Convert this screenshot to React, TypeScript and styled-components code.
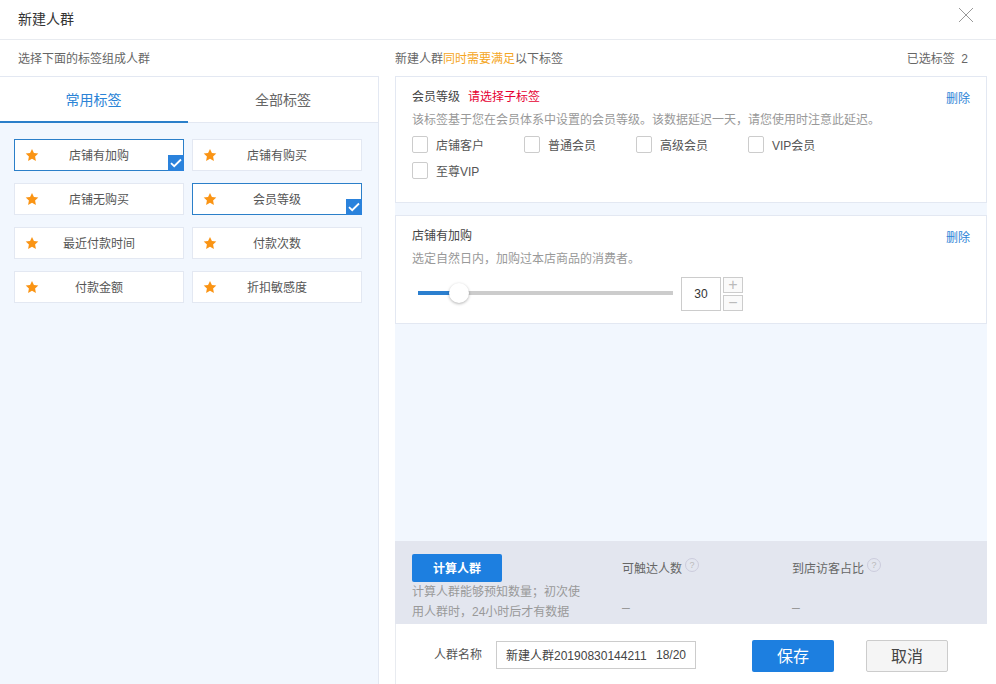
import React from "react";
import styled, { createGlobalStyle } from "styled-components";

const Global = createGlobalStyle`
  html, body { margin: 0; padding: 0; background: #fff; }
  * { box-sizing: border-box; }
  body { font-family: "Liberation Sans", "Noto Sans CJK SC", sans-serif; font-size: 12px; color: #333; }
`;

const Page = styled.div`
  width: 996px; height: 684px; overflow: hidden; display: flex; flex-direction: column; background: #fff;
`;
const Header = styled.header`
  height: 40px; flex: none; display: flex; align-items: center; justify-content: space-between;
  padding: 0 22px 3px 18px; border-bottom: 1px solid #e8ebf0;
`;
const Title = styled.h1`
  margin: 0; font-size: 14px; font-weight: 400; color: #333;
`;
const CloseButton = styled.button`
  border: 0; background: none; padding: 0; width: 16px; height: 16px; margin-top: -7px; display: block; color: #999;
`;
const Body = styled.div`
  flex: 1; display: grid; grid-template-columns: 395px 1fr; min-height: 0;
`;
const LeftColumn = styled.section`
  display: flex; flex-direction: column; min-height: 0;
`;
const RightColumn = styled.section`
  display: flex; flex-direction: column; min-height: 0; padding-right: 9px;
`;
const SubHead = styled.div<{ $pad?: string }>`
  height: 36px; flex: none; display: flex; align-items: center; justify-content: space-between;
  padding: ${(p) => p.$pad || "0"}; color: #666; font-size: 12px;
`;
const Accent = styled.span`
  color: #f5a623;
`;
const LeftPanel = styled.div`
  flex: 1; width: 379px; border-top: 1px solid #e3e8f2; border-right: 1px solid #e3e8f2;
  display: flex; flex-direction: column; background: #f2f7fe;
`;
const Tabs = styled.div`
  display: grid; grid-template-columns: 188px 1fr; height: 46px; flex: none; background: #fff;
  border-bottom: 1px solid #e3e8f2;
`;
const Tab = styled.div<{ $active?: boolean }>`
  display: flex; align-items: center; justify-content: center; font-size: 14px; height: 46px; padding: 0 ${(p) => (p.$active ? "1px" : "0")} 1px 0;
  color: ${(p) => (p.$active ? "#2b83d6" : "#666")};
  border-bottom: 2px solid ${(p) => (p.$active ? "#2b7fc9" : "transparent")};
`;
const TagGrid = styled.div`
  display: grid; grid-template-columns: 170px 170px; column-gap: 8px; row-gap: 12px; padding: 16px 14px;
`;
const TagCard = styled.div<{ $selected?: boolean }>`
  position: relative; height: 32px; background: #fff; display: grid; grid-template-columns: 1fr auto 1fr; align-items: center;
  padding-left: 10px; font-size: 12px; color: #555;
  border: 1px solid ${(p) => (p.$selected ? "#2b7fc9" : "#e3e8f2")};
`;
const TagStar = styled.svg`
  width: 14px; height: 14px; color: #fa9414; display: block;
`;
const TagName = styled.span`
  transform: translate(-5px, -1px);
`;
const Badge = styled.span`
  position: absolute; right: -1px; bottom: -1px; width: 16px; height: 16px; background: #2a82dc;
  display: flex; align-items: center; justify-content: center;
`;
const Main = styled.div`
  flex: 1; background: #f2f7fe; display: flex; flex-direction: column; gap: 12px; min-height: 0;
`;
const Card = styled.article<{ $h: number }>`
  height: ${(p) => p.$h}px; background: #fff; border: 1px solid #e3e8f2; padding: 8px 16px 0; position: relative;
`;
const CardHead = styled.div`
  display: flex; align-items: center; gap: 8px; height: 20px; font-size: 12px; color: #444;
`;
const Warn = styled.span`
  color: #e60033;
`;
const DeleteLink = styled.a`
  margin-left: auto; color: #2b83d6; font-size: 12px; position: relative; top: 2px;
`;
const Desc = styled.p`
  margin: 6px 0 0; color: #999; font-size: 12px; line-height: 18px;
`;
const Checks = styled.div`
  display: grid; grid-template-columns: repeat(4, 112px); row-gap: 8px; margin-top: 6px;
`;
const CheckItem = styled.label`
  display: flex; align-items: center; gap: 8px; height: 18px; color: #555; font-size: 12px;
`;
const CheckBox = styled.span`
  width: 16px; height: 17px; border: 1px solid #ccc; border-radius: 2px; background: #fff; flex: none;
`;
const SliderRow = styled.div`
  display: flex; align-items: center; margin-top: 9px; padding-left: 6px; gap: 8px;
`;
const Track = styled.div`
  position: relative; width: 255px; height: 4px; background: #ccc; margin-bottom: 2px;
`;
const Fill = styled.div`
  height: 4px; background: #2b7fcf;
`;
const Thumb = styled.span`
  position: absolute; top: -8px; width: 20px; height: 20px; border-radius: 50%; background: #fff;
  box-shadow: 0 1px 3px rgba(0, 0, 0, 0.3);
`;
const NumberBox = styled.div`
  width: 40px; height: 34px; border: 1px solid #ccc; display: flex; align-items: center; justify-content: center; font-size: 12px; color: #333;
`;
const Steppers = styled.div`
  display: flex; flex-direction: column; gap: 2px; margin-left: -6px;
`;
const Stepper = styled.span`
  width: 20px; height: 16px; border: 1px solid #ccc; color: #bbb; background: #fafafa;
  display: flex; align-items: center; justify-content: center; font-size: 16px; line-height: 1;
`;
const CalcPanel = styled.div`
  height: 83px; flex: none; background: #e3e6ef; display: grid; grid-template-columns: 210px 170px 1fr; padding: 13px 0 0 17px;
`;
const CalcIntro = styled.div`
  width: 170px;
`;
const CalcButton = styled.button`
  display: flex; align-items: center; justify-content: center; width: 90px; height: 28px; border: 0; border-radius: 2px; background: #1d7fe0; color: #fff; font: inherit; font-weight: 700; padding: 0 0 2px;
`;
const CalcNote = styled.p`
  margin: 0; color: #999; font-size: 12px; line-height: 20px; width: 170px;
`;
const Stat = styled.div`
  display: flex; flex-direction: column; color: #666; font-size: 12px;
`;
const StatLabel = styled.div`
  display: flex; align-items: center; gap: 3px; height: 26px;
`;
const HelpIcon = styled.span`
  width: 14px; height: 14px; border: 1px solid #ccd; border-radius: 50%; color: #bbb; font-size: 9px;
  display: inline-flex; align-items: center; justify-content: center; position: relative; top: -2px;
`;
const StatValue = styled.div`
  margin-top: 17px; color: #999; line-height: 20px; font-size: 14px;
`;
const Footer = styled.div`
  height: 60px; flex: none; display: flex; align-items: flex-start; padding: 16px 0 0 38px; border-left: 1px solid #e8ebf0; background: #fff;
`;
const NameLabel = styled.span`
  color: #555; line-height: 30px; margin-right: 14px; font-size: 12px;
`;
const NameInput = styled.div`
  width: 200px; height: 28px; margin-top: 1px; border: 1px solid #ccc; display: flex; justify-content: space-between; align-items: center; padding: 0 9px 1px; color: #444; font-size: 12px;
`;
const FooterButton = styled.button<{ $primary?: boolean }>`
  width: 82px; height: 32px; border-radius: 2px; font-size: 16px; padding: 0 0 2px; font-family: inherit;
  margin-left: ${(p) => (p.$primary ? "56px" : "32px")};
  color: ${(p) => (p.$primary ? "#fff" : "#444")};
  background: ${(p) => (p.$primary ? "#1d7fe0" : "#f5f5f5")};
  border: ${(p) => (p.$primary ? "0" : "1px solid #ccc")};
`;

const Star = () => (
  <TagStar viewBox="0 0 24 24" aria-hidden>
    <path fill="currentColor" d="M12 1.5l3.3 6.9 7.5 1-5.5 5.2 1.4 7.5L12 18.4l-6.7 3.7 1.4-7.5L1.2 9.4l7.5-1z" />
  </TagStar>
);

const Tick = () => (
  <svg width="12" height="10" viewBox="0 0 12 10" aria-hidden>
    <path d="M1 5.2l3.2 3L11 1.5" fill="none" stroke="#fff" strokeWidth="1.8" />
  </svg>
);

const tags: [string, boolean][] = [
  ["店铺有加购", true],
  ["店铺有购买", false],
  ["店铺无购买", false],
  ["会员等级", true],
  ["最近付款时间", false],
  ["付款次数", false],
  ["付款金额", false],
  ["折扣敏感度", false],
];

const levels = ["店铺客户", "普通会员", "高级会员", "VIP会员", "至尊VIP"];

export default function App() {
  return (
    <Page>
      <Global />
      <Header>
        <Title>新建人群</Title>
        <CloseButton aria-label="关闭">
          <svg width="16" height="16" viewBox="0 0 16 16" aria-hidden>
            <path d="M1 1l14 14M15 1L1 15" stroke="currentColor" strokeWidth="1" fill="none" />
          </svg>
        </CloseButton>
      </Header>
      <Body>
        <LeftColumn>
          <SubHead $pad="0 0 2px 18px">选择下面的标签组成人群</SubHead>
          <LeftPanel>
            <Tabs>
              <Tab $active>常用标签</Tab>
              <Tab>全部标签</Tab>
            </Tabs>
            <TagGrid>
              {tags.map(([name, selected]) => (
                <TagCard key={name} $selected={selected}>
                  <Star />
                  <TagName>{name}</TagName>
                  {selected && (
                    <Badge>
                      <Tick />
                    </Badge>
                  )}
                </TagCard>
              ))}
            </TagGrid>
          </LeftPanel>
        </LeftColumn>
        <RightColumn>
          <SubHead $pad="0 19px 2px 0">
            <span>
              新建人群<Accent>同时需要满足</Accent>以下标签
            </span>
            <span>已选标签&nbsp;&nbsp;2</span>
          </SubHead>
          <Main>
            <Card $h={127}>
              <CardHead>
                <span>会员等级</span>
                <Warn>请选择子标签</Warn>
                <DeleteLink>删除</DeleteLink>
              </CardHead>
              <Desc>该标签基于您在会员体系中设置的会员等级。该数据延迟一天，请您使用时注意此延迟。</Desc>
              <Checks>
                {levels.map((l) => (
                  <CheckItem key={l}>
                    <CheckBox />
                    {l}
                  </CheckItem>
                ))}
              </Checks>
            </Card>
            <Card $h={109}>
              <CardHead>
                <span>店铺有加购</span>
                <DeleteLink>删除</DeleteLink>
              </CardHead>
              <Desc>选定自然日内，加购过本店商品的消费者。</Desc>
              <SliderRow>
                <Track>
                  <Fill style={{ width: 32 }} />
                  <Thumb style={{ left: 31 }} />
                </Track>
                <NumberBox>30</NumberBox>
                <Steppers>
                  <Stepper>+</Stepper>
                  <Stepper>−</Stepper>
                </Steppers>
              </SliderRow>
            </Card>
          </Main>
          <CalcPanel>
            <CalcIntro>
              <CalcButton>计算人群</CalcButton>
              <CalcNote>计算人群能够预知数量；初次使用人群时，24小时后才有数据</CalcNote>
            </CalcIntro>
            <Stat>
              <StatLabel>
                可触达人数<HelpIcon>?</HelpIcon>
              </StatLabel>
              <StatValue>–</StatValue>
            </Stat>
            <Stat>
              <StatLabel>
                到店访客占比<HelpIcon>?</HelpIcon>
              </StatLabel>
              <StatValue>–</StatValue>
            </Stat>
          </CalcPanel>
          <Footer>
            <NameLabel>人群名称</NameLabel>
            <NameInput>
              <span>新建人群20190830144211</span>
              <span>18/20</span>
            </NameInput>
            <FooterButton $primary>保存</FooterButton>
            <FooterButton>取消</FooterButton>
          </Footer>
        </RightColumn>
      </Body>
    </Page>
  );
}
